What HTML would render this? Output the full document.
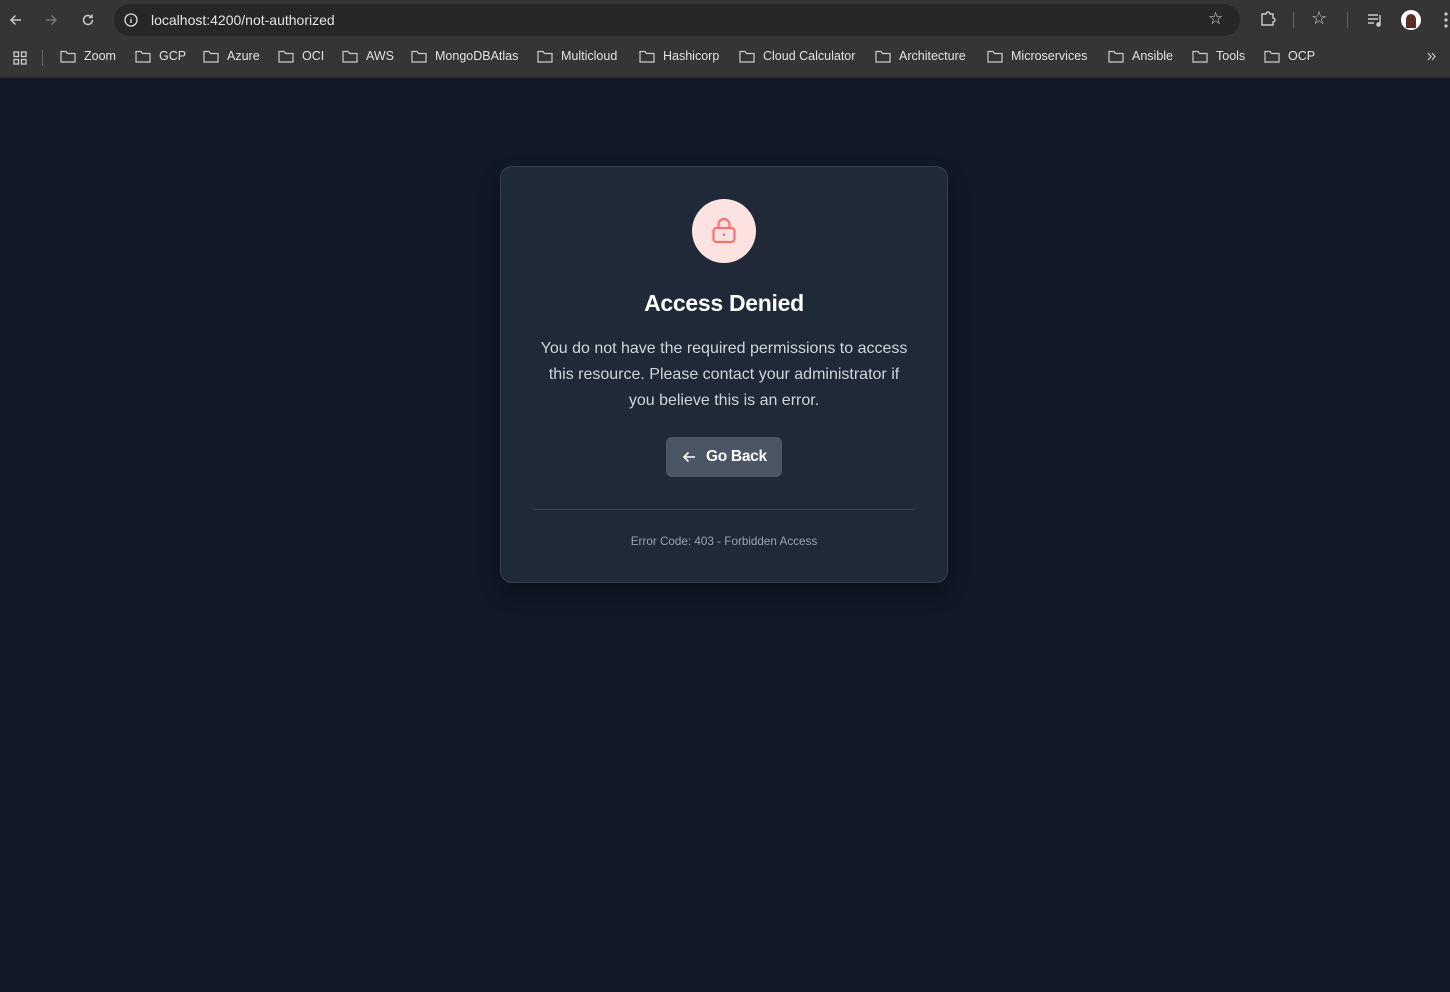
<!DOCTYPE html>
<html><head><meta charset="utf-8"><style>
*{margin:0;padding:0;box-sizing:border-box}
body{width:1450px;height:992px;background:#111827;font-family:"Liberation Sans",sans-serif;position:relative;overflow:hidden}
.top{position:absolute;left:0;top:0;width:1450px;height:40px;background:#353535}
.bm{position:absolute;left:0;top:40px;width:1450px;height:38px;background:#353535;border-bottom:1px solid #2a2a2a}
.url{position:absolute;left:114px;top:4px;width:1126px;height:32px;border-radius:16px;background:#272727}
.t{position:absolute;color:#e3e3e3;font-size:12.5px;white-space:nowrap}
.card{position:absolute;left:500px;top:166px;width:448px;height:417px;background:#1f2937;border:1px solid #374151;border-radius:12px;box-shadow:0 10px 20px rgba(0,0,0,.3)}
.c{position:absolute;left:0;width:100%;text-align:center}
</style></head><body>
<div class="top">
<svg style="position:absolute;left:8px;top:12px" width="16" height="16" viewBox="0 0 16 16"><path d="M13 8H3M7.5 3.5L3 8l4.5 4.5" stroke="#c8c8c8" stroke-width="1.5" fill="none"/></svg>
<svg style="position:absolute;left:43px;top:12px" width="16" height="16" viewBox="0 0 16 16"><path d="M3 8h10M8.5 3.5L13 8l-4.5 4.5" stroke="#777" stroke-width="1.5" fill="none"/></svg>
<svg style="position:absolute;left:80px;top:12px" width="16" height="16" viewBox="0 0 16 16"><path d="M12.5 8A4.5 4.5 0 1 1 11 4.6M12 2.5v3h-3" stroke="#c8c8c8" stroke-width="1.5" fill="none"/></svg>
<div class="url">
<svg style="position:absolute;left:9px;top:8px" width="16" height="16" viewBox="0 0 16 16"><circle cx="8" cy="8" r="6" stroke="#ddd" stroke-width="1.3" fill="none"/><path d="M8 7v4M8 5v.5" stroke="#ddd" stroke-width="1.4"/></svg>
<div class="t" style="left:37px;top:8px;font-size:14px">localhost:4200/not-authorized</div>
<div class="t" style="left:1094px;top:5px;font-size:17px;color:#ddd">☆</div>
</div>
<svg style="position:absolute;left:1259px;top:10px" width="18" height="18" viewBox="0 0 18 18"><path d="M3 4h4a2 2 0 0 1 4 0h3v4a2 2 0 0 1 0 4v3H3z" stroke="#ccc" stroke-width="1.4" fill="none"/></svg>
<div style="position:absolute;left:1293px;top:12px;width:1px;height:16px;background:#666"></div>
<div class="t" style="left:1311px;top:8px;font-size:18px;color:#ccc">☆</div>
<div style="position:absolute;left:1347px;top:12px;width:1px;height:16px;background:#666"></div>
<svg style="position:absolute;left:1366px;top:11px" width="18" height="18" viewBox="0 0 18 18" fill="none" stroke="#ccc" stroke-width="1.4"><path d="M2 4h10M2 8h10M2 12h6M14 4v9"/><circle cx="12.5" cy="13.5" r="1.6" fill="#ccc"/></svg>
<div style="position:absolute;left:1401px;top:10px;width:20px;height:20px;border-radius:50%;background:#fff"><div style="margin:4px 5px;width:10px;height:14px;border-radius:5px 5px 0 0;background:#5a2f28"></div></div>
<svg style="position:absolute;left:1443px;top:11px" width="6" height="18"><circle cx="3" cy="3" r="1.6" fill="#ccc"/><circle cx="3" cy="9" r="1.6" fill="#ccc"/><circle cx="3" cy="15" r="1.6" fill="#ccc"/></svg>
</div>
<div class="bm">
<svg style="position:absolute;left:12px;top:10px" width="16" height="16" viewBox="0 0 16 16" fill="none" stroke="#ccc" stroke-width="1.3"><rect x="2" y="2" width="4.5" height="4.5"/><rect x="9.5" y="2" width="4.5" height="4.5"/><rect x="2" y="9.5" width="4.5" height="4.5"/><rect x="9.5" y="9.5" width="4.5" height="4.5"/></svg>
<div style="position:absolute;left:42px;top:10px;width:1px;height:16px;background:#666"></div>
</div>
<svg style="position:absolute;left:0;top:0" width="1450" height="80">
<g fill="none" stroke="#ccc" stroke-width="1.2">
<path d="M61 51.5h5l1.5 2H75v8.5H61z"/>
<path d="M136 51.5h5l1.5 2H150v8.5H136z"/>
<path d="M204 51.5h5l1.5 2H218v8.5H204z"/>
<path d="M279 51.5h5l1.5 2H293v8.5H279z"/>
<path d="M343 51.5h5l1.5 2H357v8.5H343z"/>
<path d="M412 51.5h5l1.5 2H426v8.5H412z"/>
<path d="M538 51.5h5l1.5 2H552v8.5H538z"/>
<path d="M640 51.5h5l1.5 2H654v8.5H640z"/>
<path d="M740 51.5h5l1.5 2H754v8.5H740z"/>
<path d="M876 51.5h5l1.5 2H890v8.5H876z"/>
<path d="M988 51.5h5l1.5 2H1002v8.5H988z"/>
<path d="M1109 51.5h5l1.5 2H1123v8.5H1109z"/>
<path d="M1193 51.5h5l1.5 2H1207v8.5H1193z"/>
<path d="M1265 51.5h5l1.5 2H1279v8.5H1265z"/>
<path d="M1428 53l3 3.5-3 3.5M1432 53l3 3.5-3 3.5"/>
</g></svg>
<div class="t" style="left:84px;top:49px">Zoom</div>
<div class="t" style="left:159px;top:49px">GCP</div>
<div class="t" style="left:227px;top:49px">Azure</div>
<div class="t" style="left:302px;top:49px">OCI</div>
<div class="t" style="left:366px;top:49px">AWS</div>
<div class="t" style="left:435px;top:49px">MongoDBAtlas</div>
<div class="t" style="left:561px;top:49px">Multicloud</div>
<div class="t" style="left:663px;top:49px">Hashicorp</div>
<div class="t" style="left:763px;top:49px">Cloud Calculator</div>
<div class="t" style="left:899px;top:49px">Architecture</div>
<div class="t" style="left:1011px;top:49px">Microservices</div>
<div class="t" style="left:1132px;top:49px">Ansible</div>
<div class="t" style="left:1216px;top:49px">Tools</div>
<div class="t" style="left:1288px;top:49px">OCP</div>

<div class="card">
<div style="position:absolute;left:191px;top:32px;width:64px;height:64px;border-radius:50%;background:#fde2e2">
<svg style="position:absolute;left:19px;top:18px" width="26" height="28" viewBox="0 0 26 28" fill="none" stroke="#f87171" stroke-width="2.2"><rect x="2.5" y="11" width="21" height="14" rx="3"/><path d="M7.5 11V7.5a5.5 5.5 0 0 1 11 0V11"/><path d="M13 16.5v2.5"/></svg>
</div>
<div class="c" style="top:123px;font-size:23px;font-weight:bold;color:#fff;letter-spacing:-0.3px">Access Denied</div>
<div class="c" style="top:169px;font-size:16px;line-height:26px;color:#d1d5db;padding:0 36px">You do not have the required permissions to access this resource. Please contact your administrator if you believe this is an error.</div>
<div style="position:absolute;left:165px;top:270px;width:116px;height:40px;border-radius:6px;background:#4b5563;color:#fff;font-size:15.5px;font-weight:bold;line-height:40px">
<svg style="position:absolute;left:16px;top:13px" width="14" height="14" viewBox="0 0 14 14" fill="none" stroke="#fff" stroke-width="1.6"><path d="M13 7H2M6.5 2.5L2 7l4.5 4.5"/></svg>
<span style="position:absolute;left:40px;letter-spacing:-0.3px">Go Back</span></div>
<div style="position:absolute;left:32px;top:342px;width:382px;height:1px;background:#374151"></div>
<div class="c" style="top:368px;font-size:11.7px;color:#9ca3af">Error Code: 403 - Forbidden Access</div>
</div>
</body></html>
